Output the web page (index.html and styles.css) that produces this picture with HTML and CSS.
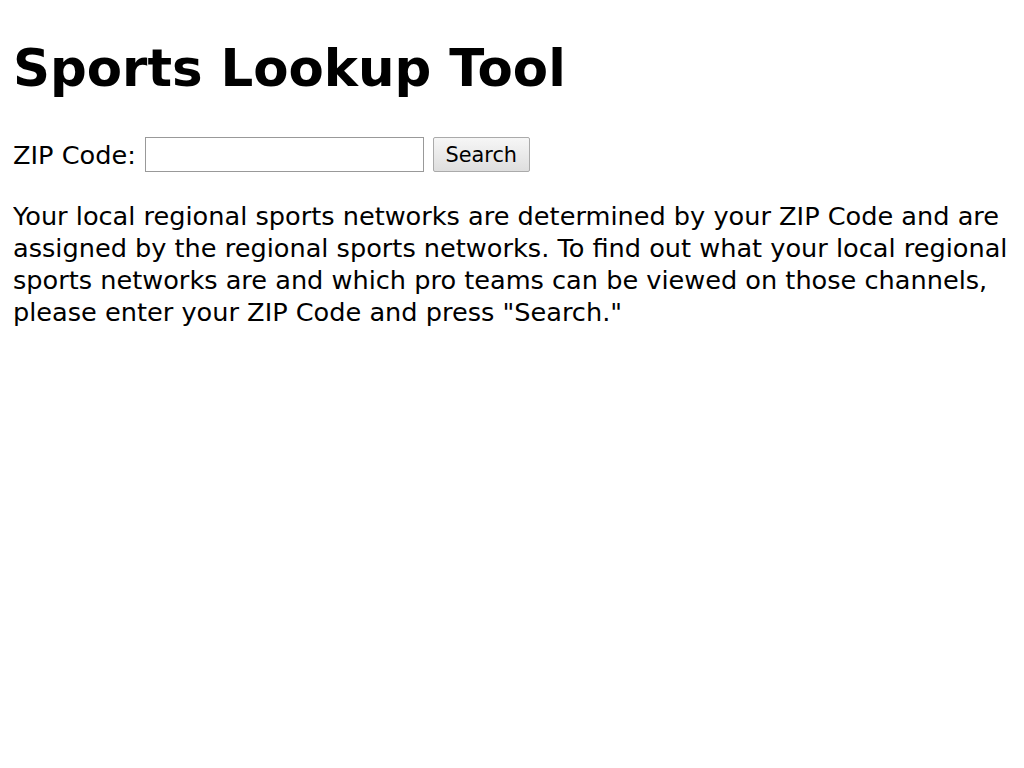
FILE: index.html
```html
<!DOCTYPE html>
<html>
<head>
<meta charset="utf-8">
<title>Sports Lookup Tool</title>
<link rel="stylesheet" href="styles.css">
</head>
<body>
<h1 class="title">Sports Lookup Tool</h1>
<form class="search-form">
  <label class="zip-label" for="zip">ZIP Code:</label>
  <input class="zip-input" id="zip" type="text">
  <button class="search-btn" type="button">Search</button>
</form>
<p class="intro">Your local regional sports networks are determined by your ZIP Code and are assigned by the regional sports networks. To find out what your local regional sports networks are and which pro teams can be viewed on those channels, please enter your ZIP Code and press "Search."</p>
</body>
</html>
```
FILE: styles.css
```css
html, body {
  background: #fff;
}
body {
  margin: 12px 11px 12px 13px;
  font-family: "DejaVu Sans", sans-serif;
  font-size: 25.6px;
  line-height: 32px;
  color: #000;
}
.title {
  font-size: 51.4px;
  line-height: 60px;
  font-weight: bold;
  margin: 26px 0 39px;
}
.search-form {
  display: flex;
  align-items: center;
  gap: 9px;
  margin: 0 0 28px;
}
.zip-input {
  width: 279px;
  height: 35px;
  box-sizing: border-box;
  border: 1px solid #999;
  background: #fff;
  padding: 0;
  font: inherit;
}
.search-btn {
  width: 97px;
  height: 35px;
  box-sizing: border-box;
  border: 1px solid #aaa;
  border-radius: 2px;
  background: linear-gradient(#f6f6f6, #dedede);
  font-family: "DejaVu Sans", sans-serif;
  font-size: 20.8px;
  color: #000;
  padding: 0;
}
.intro {
  margin: 0;
}
```
